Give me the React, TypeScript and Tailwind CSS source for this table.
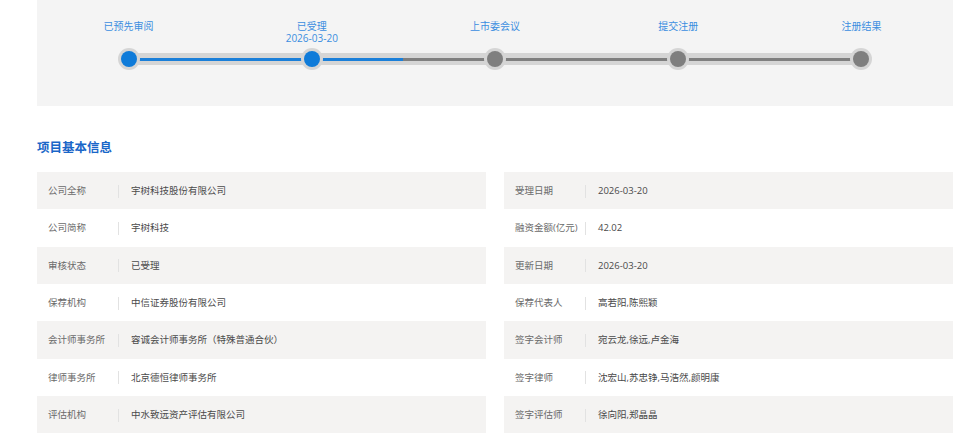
import React from "react";

const stages = [
  { name: "已预先审阅", date: "", done: true },
  { name: "已受理", date: "2026-03-20", done: true },
  { name: "上市委会议", date: "", done: false },
  { name: "提交注册", date: "", done: false },
  { name: "注册结果", date: "", done: false },
];

const left = [
  ["公司全称", "宇树科技股份有限公司"],
  ["公司简称", "宇树科技"],
  ["审核状态", "已受理"],
  ["保荐机构", "中信证券股份有限公司"],
  ["会计师事务所", "容诚会计师事务所（特殊普通合伙）"],
  ["律师事务所", "北京德恒律师事务所"],
  ["评估机构", "中水致远资产评估有限公司"],
];

const right = [
  ["受理日期", "2026-03-20"],
  ["融资金额(亿元)", "42.02"],
  ["更新日期", "2026-03-20"],
  ["保荐代表人", "高若阳,陈熙颖"],
  ["签字会计师", "宛云龙,徐远,卢金海"],
  ["签字律师", "沈宏山,苏忠铮,马浩然,颜明康"],
  ["签字评估师", "徐向阳,郑晶晶"],
];

function Column({ rows }: { rows: string[][] }) {
  return (
    <div className="flex flex-col">
      {rows.map(([k, v], i) => (
        <div
          key={k}
          className={`flex h-[37.33px] items-center pl-[11px] pt-[1px] ${i % 2 === 0 ? "bg-[#f4f3f2]" : "bg-white"}`}
        >
          <div className="w-[70px] text-[9.5px] text-[#6a6a6a] whitespace-nowrap">{k}</div>
          <div className="h-[13px] w-px bg-[#e2e2e2]" />
          <div className="ml-[12px] text-[9.5px] text-[#4a4a4a] whitespace-nowrap">{v}</div>
        </div>
      ))}
    </div>
  );
}

export default function App() {
  return (
    <div
      className="w-[960px] h-[442px] bg-white overflow-hidden"
      style={{ fontFamily: '"Open Sans", "Noto Sans CJK SC", sans-serif' }}
    >
      <div className="ml-[37px] w-[916px] h-[106px] bg-[#f4f4f4] pt-[20px]">
        <div className="grid grid-cols-5 h-[28px]">
          {stages.map((s) => (
            <div key={s.name} className="flex flex-col items-center text-[10px] leading-[12px] text-[#3b8ee0]">
              <div>{s.name}</div>
              {s.date && <div>{s.date}</div>}
            </div>
          ))}
        </div>
        <div className="relative h-[22px]">
          <div className="absolute left-[10%] right-[10%] top-[5px] h-[12px] bg-[#d5d5d5]" />
          <div className="absolute left-[10%] w-[30%] top-[9.5px] h-[3px] bg-[#1a7fd9]" />
          <div className="absolute left-[40%] w-[50%] top-[9.5px] h-[3px] bg-[#7f7f7f]" />
          <div className="relative grid grid-cols-5 h-full">
            {stages.map((s) => (
              <div key={s.name} className="flex items-center justify-center">
                <div className="flex h-[22px] w-[22px] items-center justify-center rounded-full bg-[#d5d5d5]">
                  <div className={`h-[16px] w-[16px] rounded-full ${s.done ? "bg-[#0f7bd9]" : "bg-[#7f7f7f]"}`} />
                </div>
              </div>
            ))}
          </div>
        </div>
      </div>

      <div className="ml-[37px] mt-[34px] text-[12.5px] leading-[16px] font-bold text-[#1a66c8]">项目基本信息</div>

      <div className="ml-[37px] mt-[16px] w-[916px] grid grid-cols-2 gap-x-[18px]">
        <Column rows={left} />
        <Column rows={right} />
      </div>
    </div>
  );
}
